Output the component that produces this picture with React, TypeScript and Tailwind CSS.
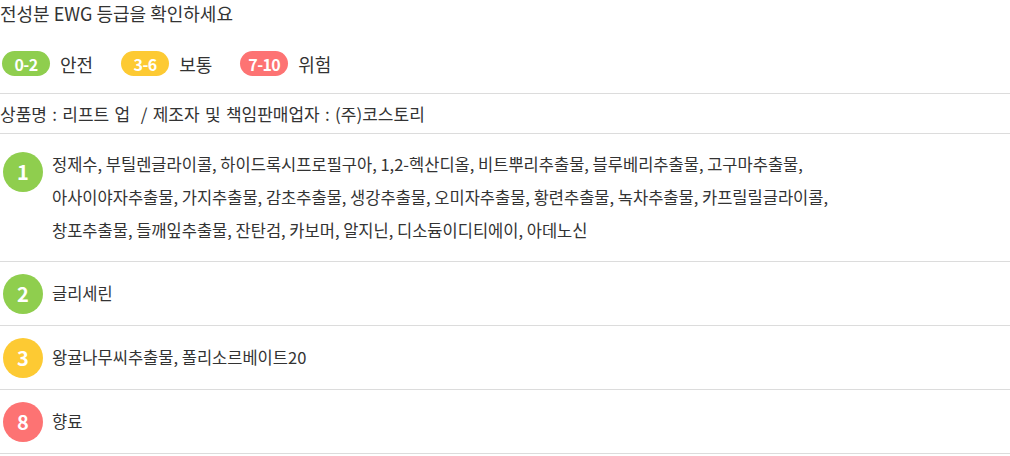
import React from 'react';

type Grade = 'safe' | 'normal' | 'danger';

const gradeColor: Record<Grade, string> = {
  safe: 'bg-[#8fce4e]',
  normal: 'bg-[#fdca33]',
  danger: 'bg-[#fd7373]',
};

const legend = [
  { range: '0-2', label: '안전', grade: 'safe' as Grade },
  { range: '3-6', label: '보통', grade: 'normal' as Grade },
  { range: '7-10', label: '위험', grade: 'danger' as Grade },
];

const ingredients = [
  {
    score: 1,
    grade: 'safe' as Grade,
    lines: [
      '정제수, 부틸렌글라이콜, 하이드록시프로필구아, 1,2-헥산디올, 비트뿌리추출물, 블루베리추출물, 고구마추출물,',
      '아사이야자추출물, 가지추출물, 감초추출물, 생강추출물, 오미자추출물, 황련추출물, 녹차추출물, 카프릴릴글라이콜,',
      '창포추출물, 들깨잎추출물, 잔탄검, 카보머, 알지닌, 디소듐이디티에이, 아데노신',
    ],
  },
  { score: 2, grade: 'safe' as Grade, lines: ['글리세린'] },
  { score: 3, grade: 'normal' as Grade, lines: ['왕귤나무씨추출물, 폴리소르베이트20'] },
  { score: 8, grade: 'danger' as Grade, lines: ['향료'] },
];

export default function App() {
  return (
    <div
      className="w-[1010px] h-[456px] bg-white text-[#333] overflow-hidden"
      style={{ fontFamily: '"Noto Sans CJK KR", "Noto Sans", sans-serif' }}
    >
      {/* Title */}
      <h2 className="text-[18px] leading-[26px] whitespace-nowrap">전성분 EWG 등급을 확인하세요</h2>

      {/* Legend */}
      <div className="flex items-center pl-[2px] pt-[25px] pb-[17px]">
        {legend.map(item => (
          <div key={item.range} className="flex items-center mr-[28px]">
            <span
              className={`${gradeColor[item.grade]} w-[48px] h-[25px] rounded-full flex items-center justify-center text-white font-bold text-[16px] leading-none tracking-[-0.6px]`}
            >
              {item.range}
            </span>
            <span className="ml-[10px] min-w-[32px] whitespace-nowrap text-[18px] leading-[24px]">{item.label}</span>
          </div>
        ))}
      </div>

      {/* Product info */}
      <div className="border-t border-b border-[#dcdcdc] h-[41px] flex items-center text-[17px] whitespace-nowrap [word-spacing:1.5px]">
        상품명 : 리프트 업&nbsp; / 제조자 및 책임판매업자 : (주)코스토리
      </div>

      {/* Ingredient rows */}
      {ingredients.map((row, i) => (
        <div
          key={row.score}
          className={`flex border-b border-[#dcdcdc] ${i === 0 ? 'items-start pt-[14px] pb-[14px]' : 'items-center py-[11.5px]'}`}
        >
          <div
            className={`${gradeColor[row.grade]} w-[40px] h-[40px] shrink-0 rounded-full ml-[3px] flex items-center justify-center text-white font-bold text-[20px] ${i === 0 ? 'mt-[4px]' : ''}`}
          >
            {row.score}
          </div>
          <div className="ml-[9px] text-[16.5px] leading-[33px]">
            {row.lines.map(line => (
              <div key={line} className="whitespace-nowrap">{line}</div>
            ))}
          </div>
        </div>
      ))}
    </div>
  );
}
